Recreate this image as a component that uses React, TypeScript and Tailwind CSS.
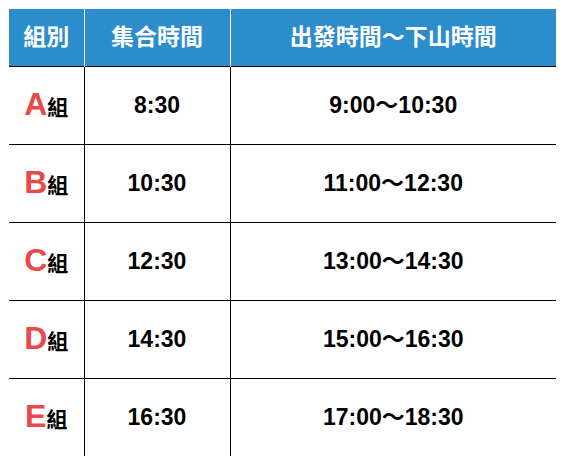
const rows = [
  { group: 'A', gather: '8:30', range: '9:00～10:30' },
  { group: 'B', gather: '10:30', range: '11:00～12:30' },
  { group: 'C', gather: '12:30', range: '13:00～14:30' },
  { group: 'D', gather: '14:30', range: '15:00～16:30' },
  { group: 'E', gather: '16:30', range: '17:00～18:30' },
];

const font = { fontFamily: '"Liberation Sans", Arial, "Noto Sans CJK TC", sans-serif' };

export default function App() {
  return (
    <div className="w-[566px] h-[464px] bg-white p-[9px]" style={font}>
      <table className="border-collapse table-fixed w-[547px]">
        <colgroup>
          <col className="w-[75px]" />
          <col className="w-[146px]" />
          <col className="w-[326px]" />
        </colgroup>
        <thead>
          <tr className="h-[57px] bg-[#2c8dcd] text-white text-[23px] font-bold">
            <th className="p-0 font-bold">組別</th>
            <th className="p-0 font-bold border-l border-white">集合時間</th>
            <th className="p-0 font-bold border-l border-white">出發時間～下山時間</th>
          </tr>
        </thead>
        <tbody>
          {rows.map((r) => (
            <tr key={r.group} className="h-[78px] border-t border-black">
              <td className="p-0 text-center">
                <span className="text-[32px] font-bold text-[#e84a4b] leading-none">{r.group}</span>
                <span className="text-[21px] font-bold text-black leading-none">組</span>
              </td>
              <td className="p-0 text-center border-l border-black text-[23px] font-bold text-black">
                {r.gather}
              </td>
              <td className="p-0 text-center border-l border-black text-[23px] font-bold text-black">
                {r.range}
              </td>
            </tr>
          ))}
        </tbody>
      </table>
    </div>
  );
}
